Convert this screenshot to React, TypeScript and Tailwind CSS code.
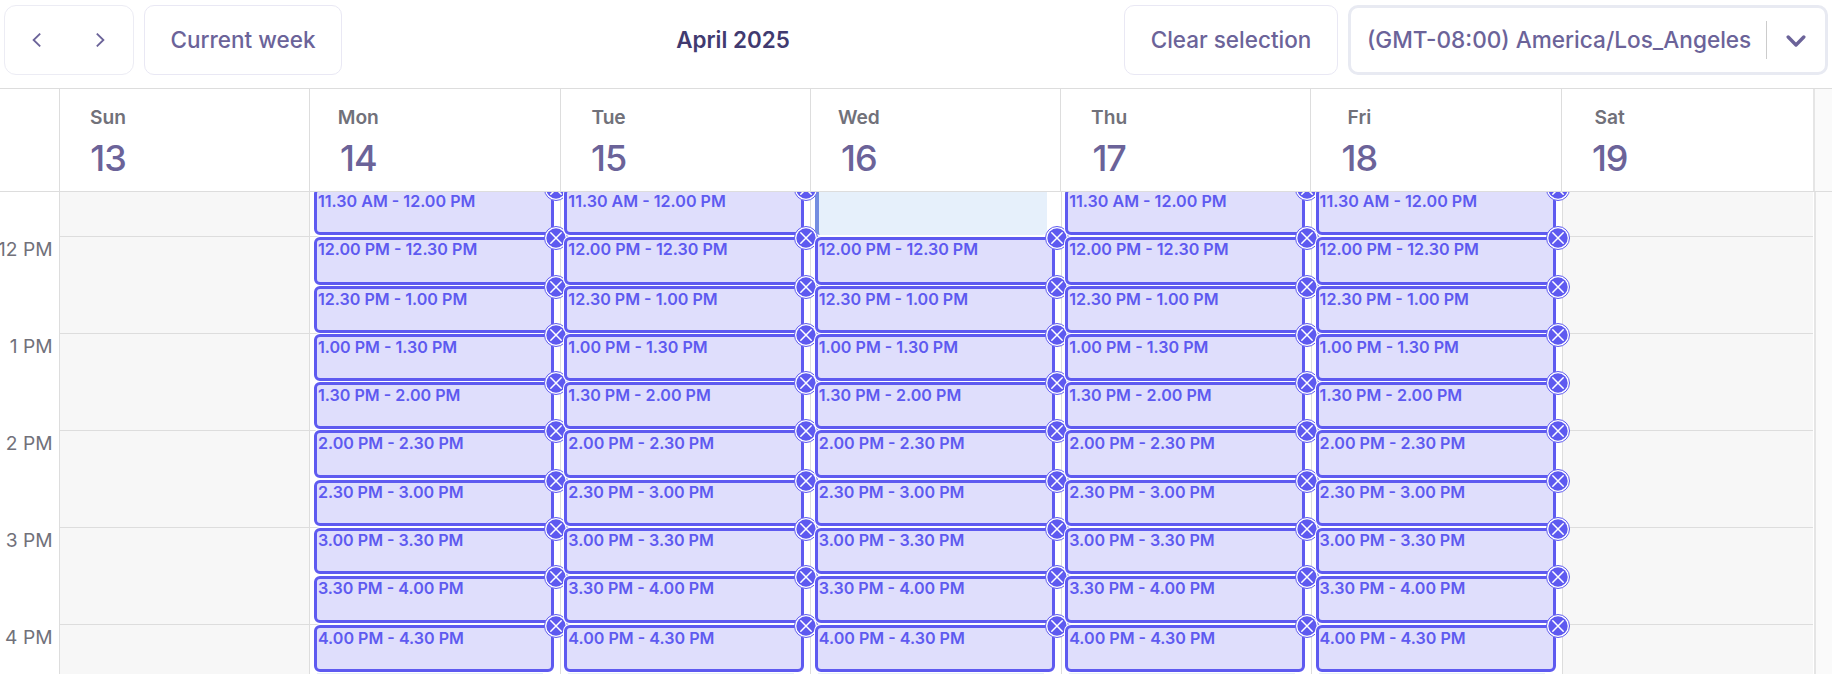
const days = [
  { name: 'Sun', date: 13, kind: 'off' },
  { name: 'Mon', date: 14, kind: 'full' },
  { name: 'Tue', date: 15, kind: 'full' },
  { name: 'Wed', date: 16, kind: 'late' },
  { name: 'Thu', date: 17, kind: 'full' },
  { name: 'Fri', date: 18, kind: 'full' },
  { name: 'Sat', date: 19, kind: 'off' },
];

const slots = [
  { top: -4, height: 47, label: '11.30 AM - 12.00 PM' },
  { top: 45, height: 48, label: '12.00 PM - 12.30 PM', tight: true },
  { top: 94, height: 47, label: '12.30 PM - 1.00 PM' },
  { top: 142, height: 47, label: '1.00 PM - 1.30 PM' },
  { top: 190, height: 47, label: '1.30 PM - 2.00 PM' },
  { top: 238, height: 48, label: '2.00 PM - 2.30 PM' },
  { top: 288, height: 46, label: '2.30 PM - 3.00 PM', tight: true },
  { top: 336, height: 46, label: '3.00 PM - 3.30 PM', tight: true },
  { top: 384, height: 47, label: '3.30 PM - 4.00 PM', tight: true },
  { top: 433, height: 47, label: '4.00 PM - 4.30 PM' },
];

const hours = ['12 PM', '1 PM', '2 PM', '3 PM', '4 PM'];

interface SlotProps {
  top: number;
  height: number;
  label: string;
  tight?: boolean;
}

function Slot({ top, height, label, tight }: SlotProps) {
  return (
    <div
      className="absolute left-[3.5px] z-10 w-[240px] rounded-[6px] border-[3px] border-[#5e5af0] bg-[#dfdefc] shadow-[0_0_0_1px_#fff]"
      style={{ top, height }}
    >
      <span className={`block whitespace-nowrap pl-px text-[16.1px] font-semibold text-[#5e5af0] ${tight ? 'leading-[18px]' : 'leading-[20px]'}`}>
        {label}
      </span>
      <button
        aria-label="Remove slot"
        className="absolute -top-[14px] -right-[17px] flex h-6 w-6 items-center justify-center rounded-full border border-[#5e5af0] bg-white"
      >
        <svg className="h-5 w-5 shrink-0" viewBox="0 0 20 20" fill="none">
          <circle cx="10" cy="10" r="9.7" fill="#5e5af0" />
          <path d="m4.8 4.8 10.4 10.4M15.2 4.8 4.8 15.2" stroke="#fff" strokeWidth="1.5" strokeLinecap="round" />
        </svg>
      </button>
    </div>
  );
}

export default function App() {
  return (
    <div className="h-[674px] w-[1832px] overflow-hidden bg-white font-['Inter',sans-serif] text-[#6b6399]">
      {/* Toolbar */}
      <header className="flex h-[88px] items-start pt-[5px] pl-1">
        <div className="flex h-[70px] w-[130px] items-center justify-between rounded-xl border border-[#ececf4] pr-7 pl-[27px]">
          <button aria-label="Previous week">
            <svg width="9" height="14" viewBox="0 0 9 14" fill="none" stroke="currentColor" strokeWidth="1.8">
              <path d="M8.2.6 1.6 7l6.6 6.4" />
            </svg>
          </button>
          <button aria-label="Next week">
            <svg width="9" height="14" viewBox="0 0 9 14" fill="none" stroke="currentColor" strokeWidth="1.8">
              <path d="M.8.6 7.4 7 .8 13.4" />
            </svg>
          </button>
        </div>
        <button className="ml-[10px] h-[70px] w-[198px] rounded-[10px] border border-[#e9e8f4] text-[22.5px] font-medium">
          Current week
        </button>
        <h1 className="ml-[281px] h-[70px] w-[220px] text-center text-[22.4px] leading-[70px] font-semibold text-[#413a70]">
          April 2025
        </h1>
        <button className="ml-[281px] h-[70px] w-[214px] rounded-[10px] border border-[#e9e8f4] text-[22.5px] font-medium">
          Clear selection
        </button>
        <div className="ml-[10px] flex h-[70px] w-[480px] items-center rounded-[10px] border-[3px] border-[#e8eaf2] pl-4 text-[22.6px] font-medium whitespace-nowrap">
          <span className="w-[399px] shrink-0">(GMT-08:00) America/Los_Angeles</span>
          <span className="h-[38px] w-px bg-[#cccccc]" />
          <svg className="ml-[19px] shrink-0" width="20" height="13" viewBox="0 0 20 13" fill="none" stroke="currentColor" strokeWidth="3.4" strokeLinecap="round" strokeLinejoin="round">
            <path d="m2.2 3 7.8 8 7.8-8" />
          </svg>
        </div>
      </header>

      {/* Day headings */}
      <div className="flex h-[104px] border-y border-[#dddddd]">
        <div className="w-[59px] shrink-0" />
        <div className="grid w-[1752px] grid-cols-7">
          {days.map((day) => (
            <div key={day.name} className="border-l border-[#dddddd] pl-[18px]">
              <div className="flex w-[60px] flex-col items-center">
                <span className="mt-[14px] text-[19.2px] leading-[28px] font-semibold text-[#71717a]">{day.name}</span>
                <span className="mt-[6px] text-[36px] leading-[42px] font-medium tracking-[-1px]">{day.date}</span>
              </div>
            </div>
          ))}
        </div>
        <div className="ml-[2px] flex-1 border-l-2 border-[#e5e5e5] bg-[#fafafa]" />
      </div>

      {/* Time grid */}
      <div className="flex h-[482px] overflow-hidden">
        <div className="flex w-[59px] shrink-0 flex-col items-end pt-[44px] pr-[6.5px]">
          {hours.map((hour) => (
            <span key={hour} className="h-[97px] shrink-0 text-[19.2px] leading-[26px] whitespace-nowrap text-[#71717a]">
              {hour}
            </span>
          ))}
        </div>
        <div className="grid w-[1754px] grid-cols-[repeat(6,250.43px)_1fr]">
          {days.map((day) => (
            <div
              key={day.name}
              className={`relative border-l border-[#dddddd] ${day.kind === 'off' ? 'bg-[#f7f7f7]' : 'bg-white'}`}
            >
              <div className="flex flex-col pt-[44px]">
                {hours.map((hour) => (
                  <div key={hour} className="h-[97px] shrink-0 border-t border-[#dddddd]" />
                ))}
              </div>
              {day.kind === 'late' && (
                <div className="absolute -top-[6px] left-[3.7px] h-[49px] w-[232px] rounded-b-[5px] border-l-4 border-[#748de0] bg-[#e6f0fb]" />
              )}
              {day.kind !== 'off' &&
                slots.slice(day.kind === 'late' ? 1 : 0).map((slot) => <Slot key={slot.label} {...slot} />)}
              {day.kind !== 'off' && (
                <div className="absolute top-[481px] left-[7px] h-px w-[226px] bg-[#e6f0fb]" />
              )}
            </div>
          ))}
        </div>
        <div className="ml-px flex-1 border-l-2 border-[#e5e5e5] bg-[#fafafa]" />
      </div>
    </div>
  );
}
